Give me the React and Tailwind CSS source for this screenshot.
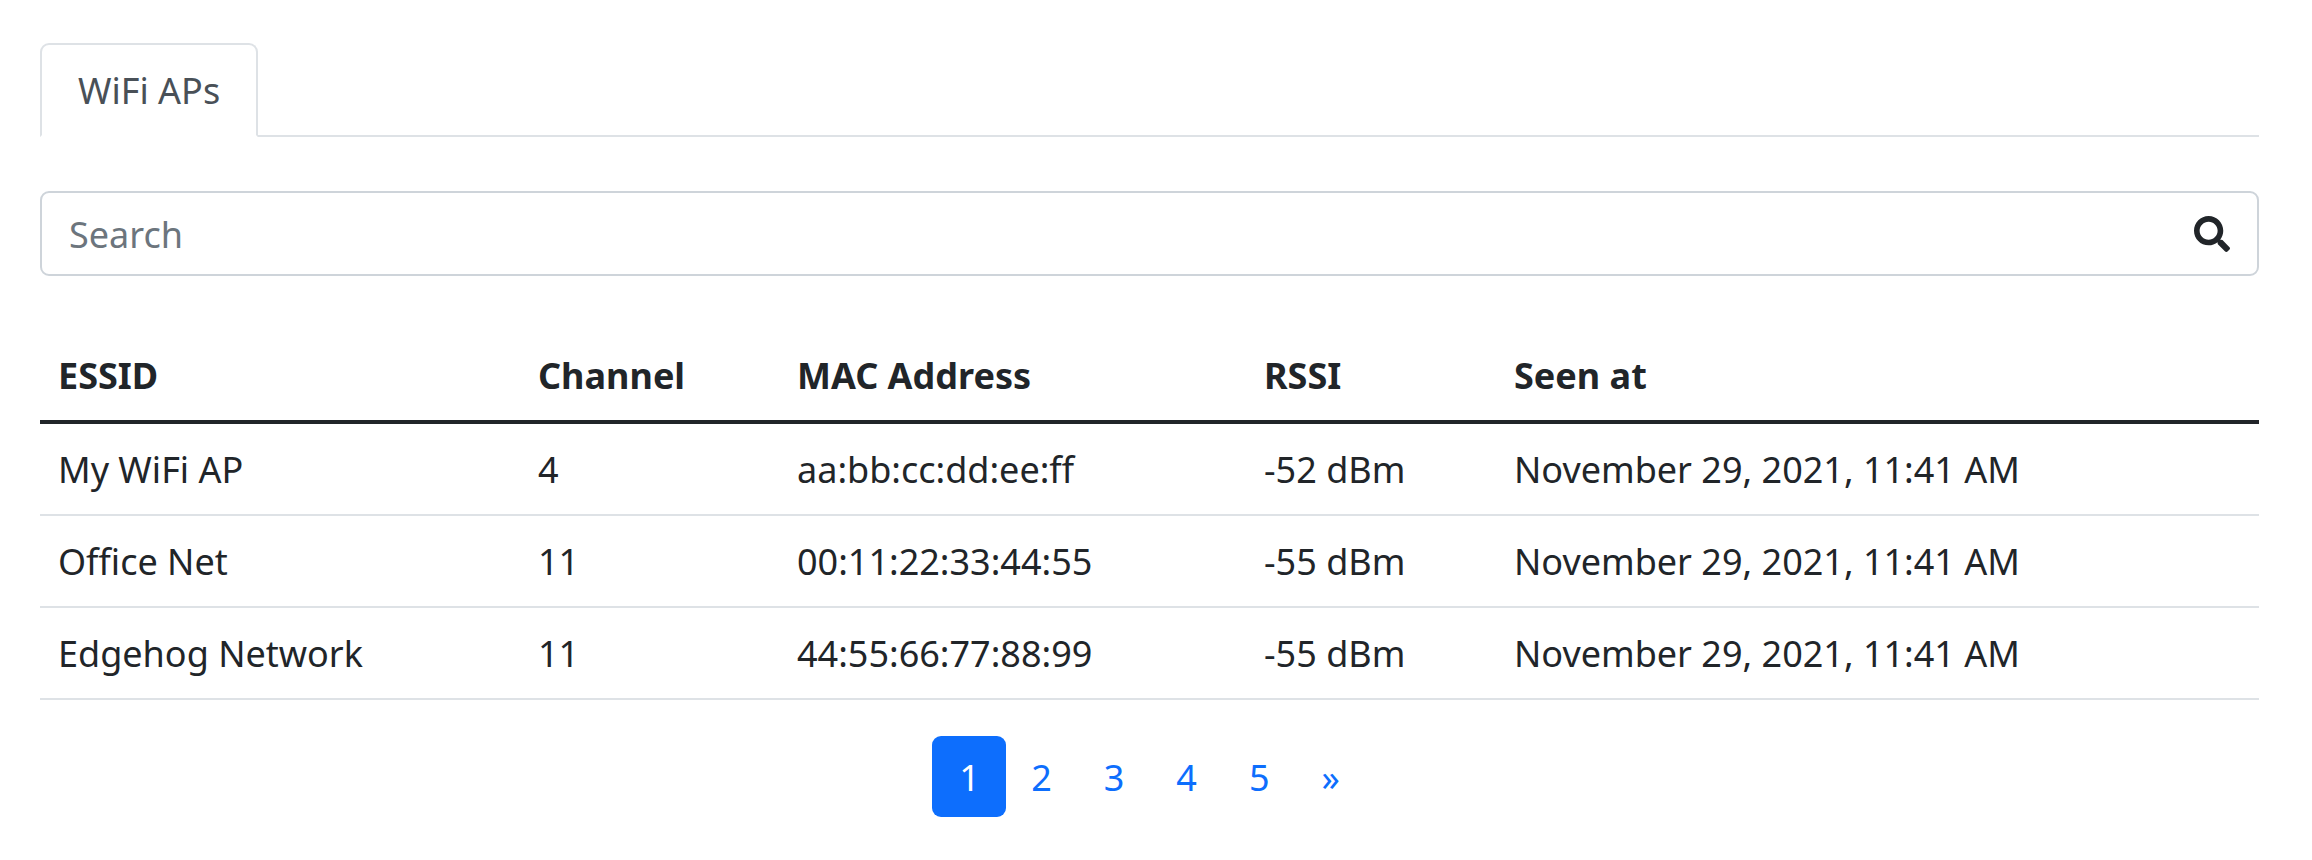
import { FaSearch } from "react-icons/fa";

const aps = [
  { essid: "My WiFi AP", channel: 4, mac: "aa:bb:cc:dd:ee:ff", rssi: -52 },
  { essid: "Office Net", channel: 11, mac: "00:11:22:33:44:55", rssi: -55 },
  { essid: "Edgehog Network", channel: 11, mac: "44:55:66:77:88:99", rssi: -55 },
];

const pages = ["1", "2", "3", "4", "5", "»"];

export default function App() {
  return (
    <div className="h-[860px] bg-white pt-[43px] pr-[53px] pl-10 font-['Noto_Sans',sans-serif] text-[36px] leading-[54px] text-[#212529]">
      <nav className="flex border-b-2 border-[#dee2e6]">
        <button className="-mb-[2px] rounded-t-[9px] border-2 border-[#dee2e6] border-b-white bg-white px-9 pt-[19px] pb-[17px] text-[#495057]">
          WiFi APs
        </button>
      </nav>

      <label className="mt-[54px] flex h-[85px] items-center rounded-[9px] border-2 border-[#ced4da] bg-white px-[27px]">
        <input
          type="text"
          placeholder="Search"
          className="h-[56px] flex-1 pt-[2px] outline-none placeholder:text-[#6c757d]"
        />
        <FaSearch className="size-9" />
      </label>

      <table className="mt-[54px] w-full table-fixed border-separate border-spacing-0 text-left">
        <colgroup>
          <col className="w-[480px]" />
          <col className="w-[259px]" />
          <col className="w-[467px]" />
          <col className="w-[250px]" />
          <col />
        </colgroup>
        <thead>
          <tr>
            {["ESSID", "Channel", "MAC Address", "RSSI", "Seen at"].map((h) => (
              <th key={h} className="border-b-4 border-[#212529] px-[18px] pt-[19px] pb-[17px] font-bold">
                {h}
              </th>
            ))}
          </tr>
        </thead>
        <tbody>
          {aps.map((ap) => (
            <tr
              key={ap.mac}
              className="[&>td]:border-b-2 [&>td]:border-[#dee2e6] [&>td]:px-[18px] [&>td]:pt-[19px] [&>td]:pb-[17px]"
            >
              <td>{ap.essid}</td>
              <td>{ap.channel}</td>
              <td>{ap.mac}</td>
              <td>{`${ap.rssi} dBm`}</td>
              <td>November 29, 2021, 11:41 AM</td>
            </tr>
          ))}
        </tbody>
      </table>

      <ul className="mt-9 flex justify-center">
        {pages.map((p) => (
          <li key={p} className="-ml-[2px] first:ml-0">
            <a
              className={
                p === "1"
                  ? "block rounded-[9px] bg-[#0d6efd] pt-[14.5px] pr-[26.4px] pb-[12.5px] pl-[27px] text-white"
                  : "block px-[27px] pt-[14.5px] pb-[12.5px] text-[#0d6efd]"
              }
            >
              {p}
            </a>
          </li>
        ))}
      </ul>
    </div>
  );
}
